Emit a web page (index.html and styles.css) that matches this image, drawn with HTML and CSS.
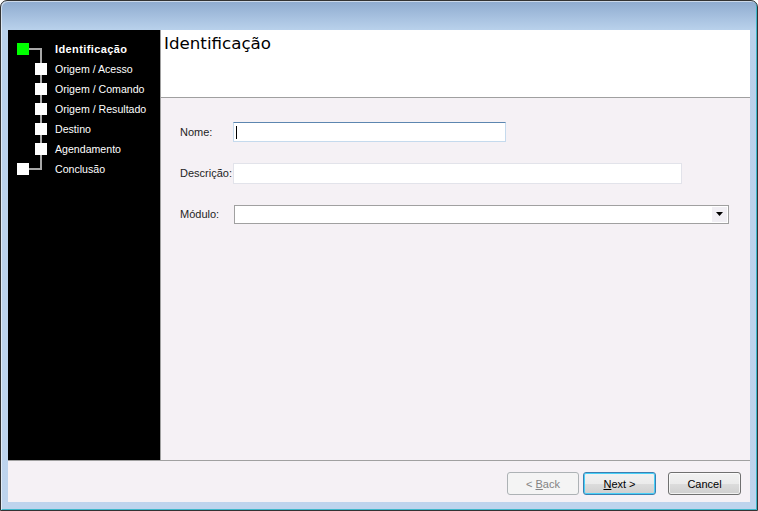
FILE: index.html
```html
<!DOCTYPE html>
<html lang="pt">

<head>
  <meta charset="UTF-8" />
  <meta name="viewport" content="width=device-width, initial-scale=1.0" />
  <title>Assistente</title>
  <link rel="stylesheet" href="styles.css">
</head>

<body>
  <div class="window">
    <div class="client">
      <div class="main">
        <div class="sidebar">
          <div class="tree">
            <div class="step root current"><span class="box"></span><span class="label">Identificação</span></div>
            <div class="step"><span class="box"></span><span class="label">Origem / Acesso</span></div>
            <div class="step"><span class="box"></span><span class="label">Origem / Comando</span></div>
            <div class="step"><span class="box"></span><span class="label">Origem / Resultado</span></div>
            <div class="step"><span class="box"></span><span class="label">Destino</span></div>
            <div class="step"><span class="box"></span><span class="label">Agendamento</span></div>
            <div class="step root"><span class="box"></span><span class="label">Conclusão</span></div>
          </div>
        </div>
        <div class="panel">
          <div class="header">
            <h1>Identificação</h1>
          </div>
          <div class="form">
            <div class="row">
              <span class="field-label">Nome:</span>
              <div class="field focused name"><span class="caret"></span></div>
            </div>
            <div class="row">
              <span class="field-label">Descrição:</span>
              <div class="field desc"></div>
            </div>
            <div class="row">
              <span class="field-label">Módulo:</span>
              <div class="combo">
                <span class="arrow"><svg width="7" height="4" viewBox="0 0 7 4"><path d="M0 0h7L3.5 4z" fill="#000"/></svg></span>
              </div>
            </div>
          </div>
        </div>
      </div>
      <div class="footer">
        <button class="btn" disabled>&lt; <u>B</u>ack</button>
        <button class="btn default"><u>N</u>ext &gt;</button>
        <button class="btn cancel">Cancel</button>
      </div>
    </div>
  </div>
</body>

</html>
```

FILE: styles.css
```css
body {
  margin: 0;
  font-family: "Liberation Sans", Arial, sans-serif;
  font-size: 11px;
  background: #fff;
}
.window {
  width: 758px;
  height: 511px;
  box-sizing: border-box;
  border: 1px solid #333;
  border-radius: 7px 7px 0 0;
  padding: 29px 7px 8px 7px;
  background: linear-gradient(#8eabcf 0, #a9c3e1 18px, #b9d1eb 29px, #bed4ed 100%);
  box-shadow: inset 1px 1px 0 rgba(255, 255, 255, 0.55), inset -1px -1px 0 #3fb6c9;
}
.client {
  height: 472px;
  display: flex;
  flex-direction: column;
  background: #f5f1f5;
}
.main {
  display: flex;
  height: 430px;
  border-bottom: 1px solid #a0a0a0;
}
.sidebar {
  width: 153px;
  background: #000;
  border-right: 1px solid #a0a0a0;
  padding: 9px 0 0 9px;
  box-sizing: border-box;
  flex: none;
}
.tree {
  background: linear-gradient(#a8a8a8, #a8a8a8) no-repeat 23px 9px / 2px 122px;
}
.step {
  display: flex;
  align-items: center;
  height: 20px;
  color: #fff;
  font-size: 10.6px;
}
.step .box {
  width: 12px;
  height: 12px;
  background: #fff;
  margin: 0 8px 0 18px;
  flex: none;
}
.step.root {
  background: linear-gradient(#a8a8a8, #a8a8a8) no-repeat 12px 9px / 12px 2px;
}
.step.root .box {
  margin: 0 26px 0 0;
}
.step.current .box {
  background: #00ff00;
}
.step.current .label {
  font-weight: bold;
  font-size: 11px;
  letter-spacing: 0.4px;
}
.panel {
  flex: 1;
  display: flex;
  flex-direction: column;
}
.header {
  height: 68px;
  background: #fff;
  border-bottom: 1px solid #a0a0a0;
  padding: 3px 0 0 3px;
  box-sizing: border-box;
  flex: none;
}
h1 {
  margin: 0;
  font-family: "DejaVu Sans", Tahoma, sans-serif;
  font-weight: normal;
  font-size: 16.7px;
  line-height: 20px;
  color: #000;
}
.form {
  padding: 24px 0 0 19px;
  display: flex;
  flex-direction: column;
  gap: 21px;
}
.row {
  display: flex;
  align-items: center;
  height: 20px;
}
.field-label {
  width: 53px;
  flex: none;
  color: #1e1e1e;
}
.field {
  height: 20px;
  box-sizing: border-box;
  background: #fff;
  border: 1px solid #e2e3ea;
  border-top-color: #abadb3;
  display: flex;
  align-items: center;
}
.field.focused {
  border-color: #c5daed;
  border-top-color: #5c86b0;
}
.name {
  width: 273px;
}
.desc {
  width: 449px;
  border-top-color: #e2e3ea;
  height: 21px;
}
.caret {
  width: 1px;
  height: 13px;
  background: #000;
  margin-left: 2px;
}
.combo {
  width: 495px;
  height: 19px;
  margin-left: 1px;
  box-sizing: border-box;
  background: #fff;
  border: 1px solid #a0a0a0;
  display: flex;
  justify-content: flex-end;
  align-items: center;
  padding-right: 1px;
}
.arrow {
  width: 15px;
  height: 15px;
  background: #f1eff4;
  display: flex;
  align-items: center;
  justify-content: center;
}
.arrow svg {
  display: block;
}
.footer {
  flex: 1;
  display: flex;
  justify-content: flex-end;
  align-items: flex-start;
  padding: 11px 9px 0 0;
}
.btn {
  width: 73px;
  height: 23px;
  margin-left: 4px;
  font-family: "Liberation Sans", Arial, sans-serif;
  font-size: 11px;
  color: #000;
  border: 1px solid #707070;
  border-radius: 3px;
  background: linear-gradient(#f2f2f2 0, #ebebeb 50%, #dddddd 50%, #cfcfcf 100%);
  box-shadow: inset 0 0 0 1px rgba(255, 255, 255, 0.7);
  padding: 0;
}
.btn:disabled {
  width: 72px;
  color: #838383;
  border-color: #adb2b5;
  background: #f4f4f4;
  box-shadow: none;
}
.btn.default {
  border-color: #3c7fb1;
  box-shadow: inset 0 0 0 1px #48d0f8;
}
.btn.cancel {
  margin-left: 12px;
}
```
